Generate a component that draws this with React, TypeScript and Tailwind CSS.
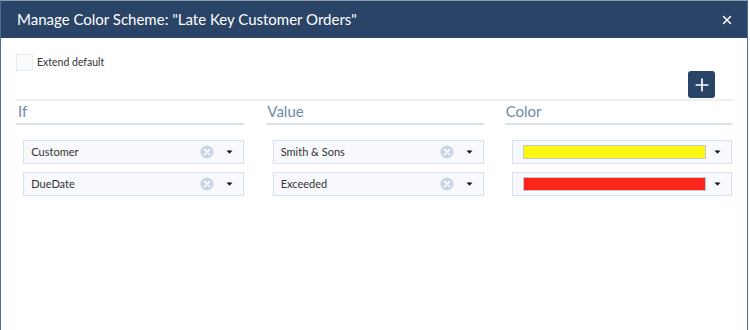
import { X, Plus } from "lucide-react";

const rows = [
  { field: "Customer", value: "Smith & Sons", color: "#fff614" },
  { field: "DueDate", value: "Exceeded", color: "#ff2419" },
];

function Caret() {
  return (
    <svg width="7" height="4" viewBox="0 0 7 4" className="shrink-0">
      <path d="M0.5 0.5 L6.5 0.5 L3.5 3.8 Z" fill="#111" />
    </svg>
  );
}

function ClearIcon() {
  return (
    <svg width="14" height="14" viewBox="0 0 14 14" className="shrink-0">
      <circle cx="7" cy="7" r="6.5" fill="#c9d6e8" />
      <path d="M4.5 4.5 L9.5 9.5 M9.5 4.5 L4.5 9.5" stroke="#fff" strokeWidth="1.6" strokeLinecap="round" />
    </svg>
  );
}

function SelectBox({ text, width }: { text: string; width: string }) {
  return (
    <div className={`flex h-6 items-center border border-[#d8e2ef] bg-[#f7f9fc] pl-[7px] pr-[10px] ${width}`}>
      <span className="flex-1 text-[11px] text-[#333]">{text}</span>
      <ClearIcon />
      <span className="ml-[12px]">
        <Caret />
      </span>
    </div>
  );
}

function ColorBox({ color }: { color: string }) {
  return (
    <div className="flex h-6 w-[220px] items-center border border-[#d8e2ef] bg-[#f7f9fc] pl-[10px] pr-[10px]">
      <div
        className="h-[14px] w-[183px] border border-[#c8c8c8]"
        style={{ backgroundColor: color }}
      />
      <span className="ml-auto">
        <Caret />
      </span>
    </div>
  );
}

export default function App() {
  return (
    <div
      className="h-[330px] w-[748px] border-x border-t border-x-[#4d6d94] border-t-[#8e9fb4] bg-white"
      style={{ fontFamily: 'Lato, "Noto Sans", sans-serif' }}
    >
      <div className="flex h-[37px] items-center justify-between bg-[#2a4468] pl-4 pr-[13px] text-white">
        <h1 className="text-[15px] font-normal">
          Manage Color Scheme: "Late Key Customer Orders"
        </h1>
        <X size={14} strokeWidth={2.5} />
      </div>

      <div className="px-[15px]">
        <label className="mt-4 flex items-center gap-[4px]">
          <span className="h-[17px] w-[17px] border border-[#e6ebf2] bg-[#f9fbfd]" />
          <span className="text-[10.5px] text-[#333]">Extend default</span>
        </label>

        <div className="flex justify-end pr-[17px]">
          <button className="flex h-[27px] w-[27px] items-center justify-center rounded-[3px] bg-[#2a4468] text-white">
            <Plus size={20} strokeWidth={2} />
          </button>
        </div>

        <div className="mt-px h-[2px] w-[718px] bg-[#f0f0f0]" />

        <div className="flex">
          <div className="w-[229px]">
            <div className="flex h-6 items-end border-b-2 border-[#d9e2ee] pb-[4px] pl-[2px] text-[15px] leading-none text-[#6e88ab]">
              If
            </div>
            <div className="mt-[15px] flex flex-col items-end gap-2">
              {rows.map((r) => (
                <SelectBox key={r.field} text={r.field} width="w-[221px]" />
              ))}
            </div>
          </div>
          <div className="ml-[22px] w-[218px]">
            <div className="flex h-6 items-end border-b-2 border-[#d9e2ee] pb-[4px] pl-[1px] text-[15px] leading-none text-[#6e88ab]">
              Value
            </div>
            <div className="mt-[15px] flex flex-col items-end gap-2">
              {rows.map((r) => (
                <SelectBox key={r.value} text={r.value} width="w-[211px]" />
              ))}
            </div>
          </div>
          <div className="ml-[21px] w-[228px]">
            <div className="flex h-6 items-end border-b-2 border-[#d9e2ee] pb-[4px] pl-[1px] text-[15px] leading-none text-[#6e88ab]">
              Color
            </div>
            <div className="mt-[15px] flex flex-col items-end gap-2">
              {rows.map((r) => (
                <ColorBox key={r.color} color={r.color} />
              ))}
            </div>
          </div>
        </div>
      </div>
    </div>
  );
}
